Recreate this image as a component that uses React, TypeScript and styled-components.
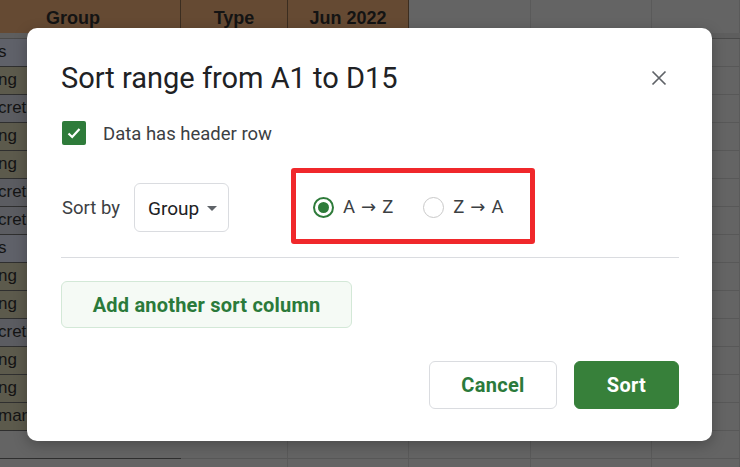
import React from 'react';
import styled, { createGlobalStyle } from 'styled-components';

const GlobalStyle = createGlobalStyle`
  html, body {
    margin: 0;
    padding: 0;
    width: 740px;
    height: 467px;
    overflow: hidden;
    background: #646464;
  }
  * { box-sizing: border-box; }
`;

const Page = styled.div`
  position: relative;
  width: 740px;
  height: 467px;
  overflow: hidden;
  background: #646464;
`;

const Sheet = styled.div`
  display: grid;
  grid-template-columns: 215px 107px 121px 122px 121px 1fr;
  margin-left: -34px;
  width: 774px;
  font-family: 'Liberation Sans', Arial, sans-serif;
  color: #141414;
`;

const HeadCell = styled.div<{ $brown?: boolean }>`
  height: 33px;
  display: flex;
  align-items: flex-end;
  justify-content: center;
  padding-bottom: 4px;
  font-size: 18px;
  font-weight: 700;
  background: ${p => (p.$brown ? '#654a33' : '#646464')};
  border-right: 1px solid ${p => (p.$brown ? '#3b2d20' : '#5a5a5a')};
`;

const FreezeBar = styled.div`
  grid-column: 1 / -1;
  height: 6px;
  background: #5e5e5e;
  border-bottom: 1px solid #4a4a4a;
`;

const DataCell = styled.div<{ $tone: string }>`
  height: 28px;
  display: flex;
  align-items: flex-end;
  padding: 0 0 4px 32px;
  font-size: 17px;
  white-space: nowrap;
  overflow: hidden;
  background: ${p => p.$tone};
  border-bottom: 1px solid #2f2f2f;
`;

const EmptyCell = styled.div`
  height: 28px;
  background: #646464;
  border-bottom: 1px solid #585858;
  border-right: 1px solid #5a5a5a;
`;

const Dialog = styled.div`
  position: absolute;
  left: 27px;
  top: 28px;
  width: 685px;
  height: 413px;
  background: #fff;
  border-radius: 10px;
  padding: 32px 33px 32px 34px;
  display: flex;
  flex-direction: column;
  font-family: Roboto, 'Noto Sans', Arial, sans-serif;
  color: #3c4043;
  box-shadow: 0 4px 14px rgba(0, 0, 0, 0.25);
`;

const Header = styled.div`
  height: 36px;
  display: flex;
  align-items: center;
  justify-content: space-between;
`;

const Title = styled.h1`
  margin: 0;
  font-size: 29px;
  line-height: 36px;
  font-weight: 400;
  color: #202124;
`;

const CloseButton = styled.button`
  width: 24px;
  height: 24px;
  margin-right: 8px;
  padding: 0;
  border: none;
  background: transparent;
  display: flex;
  align-items: center;
  justify-content: center;
`;

const CheckRow = styled.label`
  margin-top: 25px;
  height: 24px;
  display: flex;
  align-items: center;
  gap: 17px;
  padding-left: 1px;
  font-size: 18.5px;
`;

const CheckText = styled.span`
  padding-top: 2px;
`;

const CheckBox = styled.span`
  width: 24px;
  height: 24px;
  border-radius: 2px;
  background: #2e7b3a;
  display: flex;
  align-items: center;
  justify-content: center;
`;

const SortRow = styled.div`
  margin-top: 23px;
  height: 76px;
  display: flex;
  align-items: center;
  padding-left: 1px;
`;

const SortLabel = styled.span`
  font-size: 18.5px;
  margin-right: 14px;
  padding-top: 4px;
`;

const Select = styled.div`
  width: 95px;
  height: 49px;
  margin-top: 3px;
  border: 1px solid #dadce0;
  border-radius: 6px;
  display: flex;
  align-items: center;
  justify-content: space-between;
  padding: 2px 11px 0 13px;
  font-size: 19px;
  color: #202124;
  margin-right: 62px;
`;

const Caret = styled.span`
  width: 0;
  height: 0;
  border-left: 5px solid transparent;
  border-right: 5px solid transparent;
  border-top: 5px solid #5f6368;
`;

const Highlight = styled.div`
  width: 244px;
  height: 76px;
  border: 5px solid #f0282b;
  border-radius: 3px;
  display: flex;
  align-items: center;
  gap: 30px;
  padding: 2px 0 0 17px;
`;

const RadioOption = styled.label`
  display: flex;
  align-items: center;
  gap: 9px;
  font-size: 18.5px;
  color: #3c4043;
`;

const Arrow = styled.span`
  font-family: 'DejaVu Sans', sans-serif;
  font-size: 18px;
  margin: 0 6px;
`;

const Radio = styled.span<{ $on?: boolean }>`
  width: 21px;
  height: 21px;
  border-radius: 50%;
  border: ${p => (p.$on ? '2px solid #2e7b3a' : '1.5px solid #c9c9c9')};
  display: flex;
  align-items: center;
  justify-content: center;

  &::after {
    content: '';
    width: 11px;
    height: 11px;
    border-radius: 50%;
    background: ${p => (p.$on ? '#2e7b3a' : 'transparent')};
  }
`;

const Divider = styled.hr`
  margin: 13px 0 0;
  border: none;
  border-top: 1px solid #dadce0;
`;

const AddButton = styled.button`
  margin-top: 23px;
  width: 291px;
  height: 47px;
  border: 1px solid #d3e8d7;
  border-radius: 6px;
  background: #f5faf5;
  color: #2b7a3b;
  font-family: inherit;
  font-size: 20px;
  font-weight: 700;
  letter-spacing: 0.2px;
`;

const Footer = styled.div`
  margin-top: 33px;
  display: flex;
  justify-content: flex-end;
  gap: 17px;
`;

const Button = styled.button<{ $primary?: boolean }>`
  height: 48px;
  width: ${p => (p.$primary ? '105px' : '128px')};
  border-radius: 6px;
  border: 1px solid ${p => (p.$primary ? '#37803a' : '#dadce0')};
  background: ${p => (p.$primary ? '#37803a' : '#fff')};
  color: ${p => (p.$primary ? '#fff' : '#2b7a3b')};
  font-family: inherit;
  font-size: 20px;
  font-weight: 700;
  letter-spacing: 0.3px;
`;

const OLIVE = '#5c5a4c';
const SLATE = '#5f6169';
const GREY = '#5b5c61';

const rows = [
  { text: 's', tone: SLATE },
  { text: 'ng', tone: OLIVE },
  { text: 'creti', tone: GREY },
  { text: 'ng', tone: OLIVE },
  { text: 'ng', tone: OLIVE },
  { text: 'creti', tone: GREY },
  { text: 'creti', tone: GREY },
  { text: 's', tone: SLATE },
  { text: 'ng', tone: OLIVE },
  { text: 'ng', tone: OLIVE },
  { text: 'creti', tone: GREY },
  { text: 'ng', tone: OLIVE },
  { text: 'ng', tone: OLIVE },
  { text: 'mary', tone: OLIVE },
  { text: '', tone: '#646464' },
  { text: '', tone: '#646464' },
];

export default function App() {
  return (
    <Page>
      <GlobalStyle />
      <Sheet>
        <HeadCell $brown>Group</HeadCell>
        <HeadCell $brown>Type</HeadCell>
        <HeadCell $brown>Jun 2022</HeadCell>
        <HeadCell />
        <HeadCell />
        <HeadCell />
        <FreezeBar />
        {rows.map((r, i) => (
          <React.Fragment key={i}>
            <DataCell $tone={r.tone}>{r.text}</DataCell>
            <EmptyCell />
            <EmptyCell />
            <EmptyCell />
            <EmptyCell />
            <EmptyCell />
          </React.Fragment>
        ))}
      </Sheet>

      <Dialog>
        <Header>
          <Title>Sort range from A1 to D15</Title>
          <CloseButton aria-label="Close">
            <svg width="16" height="16" viewBox="0 0 16 16">
              <path d="M1.5 1.5 L14.5 14.5 M14.5 1.5 L1.5 14.5" stroke="#5f6368" strokeWidth="1.7" />
            </svg>
          </CloseButton>
        </Header>

        <CheckRow>
          <CheckBox>
            <svg width="18" height="18" viewBox="0 0 18 18">
              <path d="M3.5 9.5 L7.2 13 L14.5 5" fill="none" stroke="#fff" strokeWidth="2.2" />
            </svg>
          </CheckBox>
          <CheckText>Data has header row</CheckText>
        </CheckRow>

        <SortRow>
          <SortLabel>Sort by</SortLabel>
          <Select>
            Group
            <Caret />
          </Select>
          <Highlight>
            <RadioOption>
              <Radio $on />
              <span>A<Arrow>→</Arrow>Z</span>
            </RadioOption>
            <RadioOption>
              <Radio />
              <span>Z<Arrow>→</Arrow>A</span>
            </RadioOption>
          </Highlight>
        </SortRow>

        <Divider />

        <AddButton>Add another sort column</AddButton>

        <Footer>
          <Button>Cancel</Button>
          <Button $primary>Sort</Button>
        </Footer>
      </Dialog>
    </Page>
  );
}
